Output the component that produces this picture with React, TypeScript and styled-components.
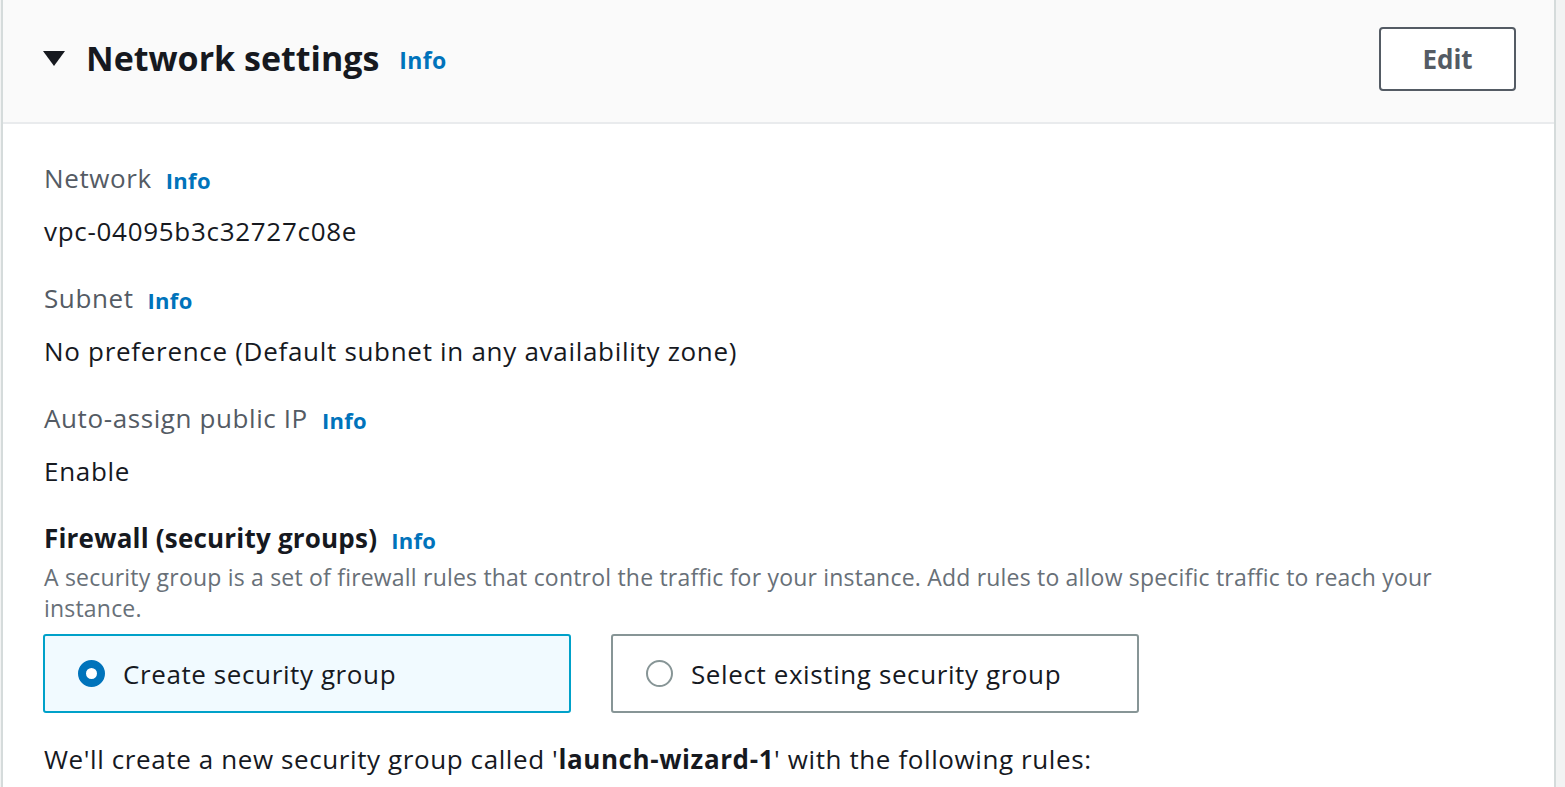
import styled, { createGlobalStyle } from "styled-components";

const GlobalStyle = createGlobalStyle`
  html, body {
    margin: 0;
    padding: 0;
    background: #f2f3f3;
    font-family: "Open Sans", "Noto Sans", sans-serif;
    color: #16191f;
  }
`;

function InfoLink({ size }: { size?: number }) {
  return <Info $size={size}>Info</Info>;
}

function Field({ label, value }: { label: string; value: string }) {
  return (
    <FieldBlock>
      <LabelRow>
        <Label>{label}</Label>
        <InfoLink />
      </LabelRow>
      <Value>{value}</Value>
    </FieldBlock>
  );
}

function App() {
  return (
    <>
      <GlobalStyle />
      <Panel>
        <Header>
          <HeadingRow>
            <Caret viewBox="0 0 22 16">
              <path d="M0 0 H22 L11 15 Z" fill="#16191f" />
            </Caret>
            <Heading>Network settings</Heading>
            <InfoLink size={23} />
          </HeadingRow>
          <EditButton>Edit</EditButton>
        </Header>
        <Body>
          <Field label="Network" value="vpc-04095b3c32727c08e" />
          <Field
            label="Subnet"
            value="No preference (Default subnet in any availability zone)"
          />
          <Field label="Auto-assign public IP" value="Enable" />
          <Firewall>
            <LabelRow>
              <StrongLabel>Firewall (security groups)</StrongLabel>
              <InfoLink />
            </LabelRow>
            <Description>
              A security group is a set of firewall rules that control the
              traffic for your instance. Add rules to allow specific traffic to
              reach your instance.
            </Description>
            <Tiles>
              <Tile $selected>
                <Radio $selected />
                <TileText>Create security group</TileText>
              </Tile>
              <Tile>
                <Radio />
                <TileText>Select existing security group</TileText>
              </Tile>
            </Tiles>
          </Firewall>
          <Note>
            We'll create a new security group called '<b>launch-wizard-1</b>'
            with the following rules:
          </Note>
        </Body>
      </Panel>
    </>
  );
}

export default App;

const Panel = styled.div`
  margin-left: 1px;
  width: 1555px;
  background: #ffffff;
  border: 2px solid #d5dbdb;
  border-top: none;
  border-bottom: none;
  box-sizing: border-box;
  min-height: 787px;
`;

const Header = styled.div`
  display: flex;
  align-items: center;
  justify-content: space-between;
  height: 124px;
  box-sizing: border-box;
  padding: 0 38px 4px 40px;
  background: #fafafa;
  border-bottom: 2px solid #e9ebed;
`;

const HeadingRow = styled.div`
  display: flex;
  align-items: center;
  margin-top: -2px;
`;

const Caret = styled.svg`
  width: 22px;
  height: 16px;
  margin-right: 21px;
  margin-top: 2px;
`;

const Heading = styled.h2`
  margin: 0 20px 0 0;
  font-size: 34px;
  font-weight: 700;
  line-height: 44px;
  color: #16191f;
`;

const Info = styled.span<{ $size?: number }>`
  font-size: ${(p) => p.$size || 22}px;
  font-weight: 700;
  color: #0073bb;
  margin-top: 4px;
  letter-spacing: 0.3px;
`;

const EditButton = styled.button`
  width: 137px;
  height: 64px;
  background: #ffffff;
  border: 2px solid #545b64;
  border-radius: 4px;
  font-family: inherit;
  font-size: 26px;
  font-weight: 700;
  color: #545b64;
`;

const Body = styled.div`
  display: flex;
  flex-direction: column;
  padding: 37px 41px 0 41px;
`;

const FieldBlock = styled.div`
  display: flex;
  flex-direction: column;
  gap: 19px;
  margin-bottom: 33px;
`;

const LabelRow = styled.div`
  display: flex;
  align-items: center;
  gap: 14px;
  height: 34px;
`;

const Label = styled.span`
  font-size: 26px;
  letter-spacing: 0.6px;
  color: #545b64;
`;

const StrongLabel = styled.span`
  font-size: 26px;
  font-weight: 700;
  letter-spacing: 0.2px;
  color: #16191f;
`;

const Value = styled.div`
  font-size: 26px;
  letter-spacing: 0.7px;
  line-height: 34px;
  color: #16191f;
`;

const Firewall = styled.div`
  display: flex;
  flex-direction: column;
`;

const Description = styled.p`
  margin: 7px 0 0 0;
  max-width: 1420px;
  font-size: 23px;
  letter-spacing: 0.2px;
  line-height: 31px;
  color: #687078;
`;

const Tiles = styled.div`
  display: flex;
  gap: 40px;
  margin-top: 10px;
  margin-left: -1px;
`;

const Tile = styled.div<{ $selected?: boolean }>`
  display: flex;
  align-items: center;
  gap: 18px;
  width: 528px;
  height: 79px;
  flex-shrink: 0;
  box-sizing: border-box;
  padding-left: 33px;
  border-radius: 3px;
  border: 2px solid ${(p) => (p.$selected ? "#00a1c9" : "#879596")};
  background: ${(p) => (p.$selected ? "#f1faff" : "#ffffff")};
`;

const Radio = styled.span<{ $selected?: boolean }>`
  width: 27px;
  height: 27px;
  box-sizing: border-box;
  border-radius: 50%;
  background: #ffffff;
  border: ${(p) => (p.$selected ? "8px solid #0073bb" : "2px solid #879596")};
`;

const TileText = styled.span`
  font-size: 26px;
  letter-spacing: 0.6px;
  color: #16191f;
`;

const Note = styled.p`
  margin: 29px 0 0 0;
  font-size: 26px;
  letter-spacing: 0.6px;
  line-height: 34px;
  color: #16191f;
`;
